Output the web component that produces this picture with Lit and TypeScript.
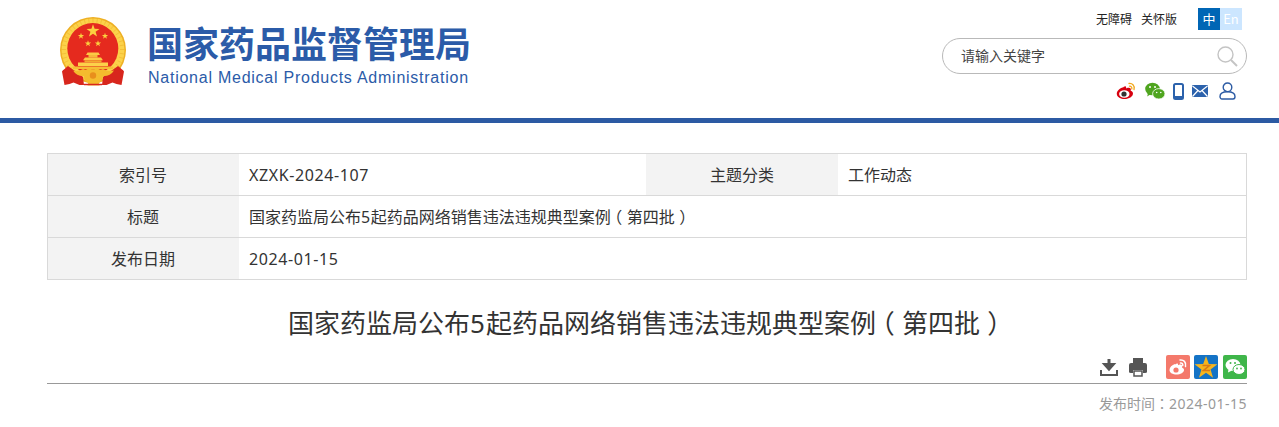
import { LitElement, html, css, svg } from "lit";
import { customElement } from "lit/decorators.js";

const star = (cx: number, cy: number, r: number, fill = "#fbd03f") => {
  const pts: string[] = [];
  for (let i = 0; i < 10; i++) {
    const a = -Math.PI / 2 + (i * Math.PI) / 5;
    const q = i % 2 ? r * 0.4 : r;
    pts.push(`${(cx + q * Math.cos(a)).toFixed(2)},${(cy + q * Math.sin(a)).toFixed(2)}`);
  }
  return svg`<polygon points=${pts.join(" ")} fill=${fill}></polygon>`;
};

const TITLE = html`国家药监局公布<span class="lat">5</span>起药品网络销售违法违规典型案例<span class="op">（</span>第四批<span class="cp">）</span>`;

@customElement("app-root")
export class AppRoot extends LitElement {
  static styles = css`
    :host { display: block; width: 1279px; height: 427px; overflow: hidden; background: #fff; color: #333;
      font-family: "Noto Sans", "Noto Sans CJK SC", sans-serif; }
    svg { display: block; }
    .lat { letter-spacing: 0.6px; }
    .op { font-feature-settings: "halt"; padding-left: 0.22em; padding-right: 0.28em; }
    .cp { font-feature-settings: "halt"; padding-left: 0.28em; padding-right: 0.22em; }
    .header { height: 118px; display: flex; justify-content: space-between; box-sizing: border-box; }
    .brand { display: flex; padding: 15px 0 0 58px; gap: 19px; align-items: flex-start; }
    .names { display: flex; flex-direction: column; padding-top: 5px; }
    .cn { font: 700 36px/44px "Noto Sans CJK SC", sans-serif; color: #2b5ba8; white-space: nowrap; }
    .en { font: 400 16px/20px "Liberation Sans", sans-serif; letter-spacing: 0.75px; color: #2b5ba8; white-space: nowrap; margin-top: 4px; margin-left: 1px; }
    .tools { width: 305px; margin-right: 32px; display: flex; flex-direction: column; padding-top: 8px; box-sizing: border-box; }
    .links { display: flex; height: 22px; align-items: center; justify-content: flex-end; padding-right: 5px; font: 12px/22px "Noto Sans CJK SC", sans-serif; color: #222; }
    .l { margin-right: 9px; }
    .l.last { margin-right: 21px; }
    .lang { width: 22px; height: 22px; text-align: center; color: #fff; font-size: 13px; background: #0066b5; }
    .lang.off { background: #cce6ff; }
    .search { margin-top: 8px; height: 36px; box-sizing: border-box; border: 1px solid #b9b9b9; border-radius: 18px; display: flex; align-items: center; justify-content: space-between; padding: 0 7px 0 18px; font: 14px/32px "Noto Sans CJK SC", sans-serif; color: #444; }
    .search span { padding-bottom: 2px; }
    .social { display: flex; justify-content: flex-end; align-items: center; margin-top: 6px; padding-right: 11px; gap: 8px; height: 22px; }
    .bar { height: 5px; background: #2c5aa3; }
    .main { padding: 30px 32px 0 47px; }
    .meta { display: grid; grid-template-columns: 191px 407px 192px 1fr; border: 1px solid #d9d9d9; border-bottom: 0; font: 16px/43px "Noto Sans", "Noto Sans CJK SC", sans-serif; color: #333; }
    .meta > div { height: 41px; border-bottom: 1px solid #d9d9d9; white-space: nowrap; }
    .k { background: #f3f3f3; text-align: center; }
    .k.n { padding-right: 1px; }
    .v { padding-left: 10px; }
    .wide { grid-column: 2 / 5; }
    h1 { margin: 24px 0 0; font: 400 26px/38px "Noto Sans", "Noto Sans CJK SC", sans-serif; color: #333; text-align: center; }
    h1 .lat { letter-spacing: 1px; }
    .share { display: flex; justify-content: flex-end; align-items: center; margin-top: 12px; height: 26px; }
    .line { height: 1px; background: #999; margin-top: 3px; }
    .date { text-align: right; font: 14px/20px "Noto Sans", "Noto Sans CJK SC", sans-serif; color: #999; margin-top: 9px; }
    .date .lat { letter-spacing: 0.5px; }
    .colon { font-family: "Noto Sans CJK TC", sans-serif; }
    .gap10 { margin-right: 9px; }
    .gap17 { margin-right: 18px; }
    .gap4 { margin-right: 4px; }
    .gap5 { margin-right: 5px; }
    .ml1 { margin-left: 1px; }
    .ml3 { margin-left: 3px; }
  `;

  emblem() {
    const ticks = [];
    for (let i = 0; i < 44; i++) {
      const a = (i * Math.PI * 2) / 44;
      const c = Math.cos(a), s = Math.sin(a);
      ticks.push(svg`<path d="M${(93 + 27 * c).toFixed(1)} ${(49.5 + 27 * s).toFixed(1)}L${(93 + 31.5 * c).toFixed(1)} ${(49.5 + 31.5 * s).toFixed(1)}" stroke="#eaa720" stroke-width=".7" opacity=".6"></path>`);
    }
    return html`<svg width="70" height="72" viewBox="58 15 70 72">
      <circle cx="93" cy="50" r="33" fill="#eeb024"/>
      <circle cx="93" cy="50" r="31.5" fill="#fcd24a"/>
      ${ticks}
      <circle cx="92.800" cy="48.500" r="25.500" fill="#e52a1e"/>
      ${star(93, 31, 6.8)}${star(81, 36, 3.3)}${star(105, 36, 3.3)}${star(88, 43.500, 3.3)}${star(98, 43.500, 3.3)}
      <path d="M87.500 52.500h11l1.500 2.500H86z" fill="#fbcb45"/>
      <path d="M88.500 55h9v2.500h-9z" fill="#f6b93a"/>
      <path d="M85 57.500h16l2 2.800H83z" fill="#fbcb45"/>
      <path d="M84.500 60.300h17v2h-17z" fill="#f2a92e"/>
      <path d="M78 62.500h30v3.500H78z" fill="#fcd14a"/>
      <path d="M73 66.500h40v2.500H73z" fill="#f6bd36"/>
      <path d="M68 66c-3 2.500-5 4-6 5.500l2.500 13.500 5-1 4-1.500 6 2.500h4.500l-1-8-6-4.500zM118 66c3 2.500 5 4 6 5.500L121.500 85l-5-1-4-1.500-6 2.500H102l1-8 6-4.500z" fill="#d8261d"/>
      <path d="M72 70.500c4 1 8 .5 11-1.500 3 1.500 4 .5 5.500-1 2 1 3 1.500 4.500 1 1.500.5 2.500 0 4.500-1 1.500 1.500 2.500 2.500 5.500 1 3 2 7 2.500 11 1.500-2.500 4-7 6-11 5.500l-1 4-3 3 .5 2.500h-12l.5-2.500-3-3-1-4c-4 .5-8.500-1.500-11-5.500z" fill="#f4bc2e"/>
      <circle cx="93" cy="75.500" r="3.200" fill="#e88f1c"/>
      <path d="M84 84.500h18" stroke="#d8261d" stroke-width="1.500"/>
    </svg>`;
  }

  render() {
    return html`
      <div class="header">
        <div class="brand">
          ${this.emblem()}
          <div class="names">
            <div class="cn">国家药品监督管理局</div>
            <div class="en">National Medical Products Administration</div>
          </div>
        </div>
        <div class="tools">
          <div class="links"><span class="l">无障碍</span><span class="l last">关怀版</span><span class="lang">中</span><span class="lang off">En</span></div>
          <div class="search"><span>请输入关键字</span>
            <svg width="24" height="24" viewBox="0 0 24 24" fill="none" stroke="#c4c4c4" stroke-width="1.4"><circle cx="10.500" cy="10.500" r="7.500"/><path d="M16 16l6 6" stroke-width="2"/></svg>
          </div>
          <div class="social">
            <svg width="20" height="18" viewBox="0 0 20 18"><path d="M8 5C4 6 .5 9 .8 12c.3 3.400 4 5 7.700 5 4.500 0 8.500-2.500 8.500-5.500 0-1.800-1.600-2.400-2.400-2.700.6-1.500.4-3-1.900-3-1.200 0-2.300.5-2.600.6.300-1.700-.2-3-2.600-1.400z" fill="#d7000f"/><ellipse cx="8.300" cy="12" rx="5.200" ry="3.800" fill="#fff"/><circle cx="8" cy="12" r="2.600" fill="#333"/><path d="M13 1.500c3-.5 6 2 5 6M13.500 4.200c1.500-.2 2.700 1 2.300 2.600" fill="none" stroke="#f2a81d" stroke-width="1.300" stroke-linecap="round"/></svg>
            <svg class="ml1" width="20" height="18" viewBox="0 0 20 18"><ellipse cx="7.500" cy="7" rx="7.300" ry="6.300" fill="#4fa51f"/><path d="M3 11l-.8 3.500L6 12z" fill="#4fa51f"/><ellipse cx="13.800" cy="11.800" rx="6.200" ry="5.200" fill="#4fa51f" stroke="#fff" stroke-width=".8"/><circle cx="5" cy="5" r="1" fill="#fff"/><circle cx="10" cy="5" r="1" fill="#fff"/><circle cx="11.700" cy="10.500" r=".8" fill="#fff"/><circle cx="15.800" cy="10.500" r=".8" fill="#fff"/></svg>
            <svg width="11" height="17" viewBox="0 0 11 17"><rect x="1" y="1" width="9" height="15" rx="1.500" fill="none" stroke="#2c62ac" stroke-width="2"/><rect x="1" y="13" width="9" height="3" fill="#2c62ac"/></svg>
            <svg width="16" height="12" viewBox="0 0 16 12"><rect width="16" height="12" rx="1" fill="#2c62ac"/><path d="M.5 1L8 7l7.500-6M.5 11.500L6 5.500M15.500 11.500L10 5.500" fill="none" stroke="#fff" stroke-width="1.200"/></svg>
            <svg class="ml3" width="17" height="18" viewBox="0 0 17 18" fill="none" stroke="#2c5ba4" stroke-width="1.400"><circle cx="8.500" cy="5.300" r="4.300"/><path d="M1 14.500c0-3 3-4.800 7.500-4.800s7.500 1.800 7.500 4.800c0 1.700-1 2.500-2 2.500H3c-1 0-2-.8-2-2.500z"/></svg>
          </div>
        </div>
      </div>
      <div class="bar"></div>
      <div class="main">
        <div class="meta">
          <div class="k n">索引号</div><div class="v"><span class="lat">XZXK-2024-107</span></div><div class="k">主题分类</div><div class="v">工作动态</div>
          <div class="k n">标题</div><div class="v wide">${TITLE}</div>
          <div class="k n">发布日期</div><div class="v wide"><span class="lat">2024-01-15</span></div>
        </div>
        <h1>${TITLE}</h1>
        <div class="share">
          <svg class="gap10" width="20" height="20" viewBox="0 0 20 20"><path d="M10 2v8M6 7.500l4 4.500 4-4.500z" fill="#555" stroke="#555" stroke-width="3"/><path d="M2 13v5h16v-5" fill="none" stroke="#555" stroke-width="2"/></svg>
          <svg class="gap17" width="20" height="20" viewBox="0 0 20 20"><path d="M5 1h10v5H5z" fill="#555"/><path d="M1 8q0-2 2-2h14q2 0 2 2v7q0 1-2 1h-2v-3H5v3H3q-2 0-2-1z" fill="#555"/><rect x="6" y="14" width="8" height="5" fill="#fff" stroke="#555" stroke-width="1.500"/></svg>
          <svg class="gap4" width="24" height="24" viewBox="0 0 24 24"><rect width="24" height="24" rx="2" fill="#f4796b"/><path d="M9 9C6 10 3.500 12 3.500 15c0 3 3.500 4.500 7 4.500 4 0 7.500-2 7.500-4.500 0-1.500-1-2-2-2.500.5-1.500.2-3-1.500-3-1 0-2 .4-2.500.7.300-1.500-.5-2.400-3-.700z" fill="#fff"/><circle cx="10" cy="15" r="2.600" fill="#f4796b"/><path d="M14 5c3.500-.5 6.500 2 5.500 6.500M14.500 8c1.500-.2 2.500 1 2.200 2.500" fill="none" stroke="#fff" stroke-width="1.500" stroke-linecap="round"/></svg>
          <svg class="gap5" width="24" height="24" viewBox="0 0 24 24"><rect width="24" height="24" rx="2" fill="#1473c6"/>${star(12, 13, 12, "#f6b51e")}<path d="M8.500 10.500h7l-6 5h6.500" fill="none" stroke="#d97a16" stroke-width="1.600"/></svg>
          <svg width="24" height="24" viewBox="0 0 24 24"><rect width="24" height="24" rx="2" fill="#3fb64a"/><ellipse cx="10" cy="10" rx="7.500" ry="6" fill="#fff"/><path d="M5.500 14l-.5 3.500 4-2z" fill="#fff"/><ellipse cx="16" cy="14.500" rx="6" ry="5" fill="#fff" stroke="#3fb64a"/><circle cx="7.500" cy="8" r="1" fill="#3fb64a"/><circle cx="12" cy="8" r="1" fill="#3fb64a"/><circle cx="14" cy="13.500" r=".9" fill="#3fb64a"/><circle cx="18" cy="13.500" r=".9" fill="#3fb64a"/></svg>
        </div>
        <div class="line"></div>
        <div class="date">发布时间<span class="colon">：</span><span class="lat">2024-01-15</span></div>
      </div>
    `;
  }
}
